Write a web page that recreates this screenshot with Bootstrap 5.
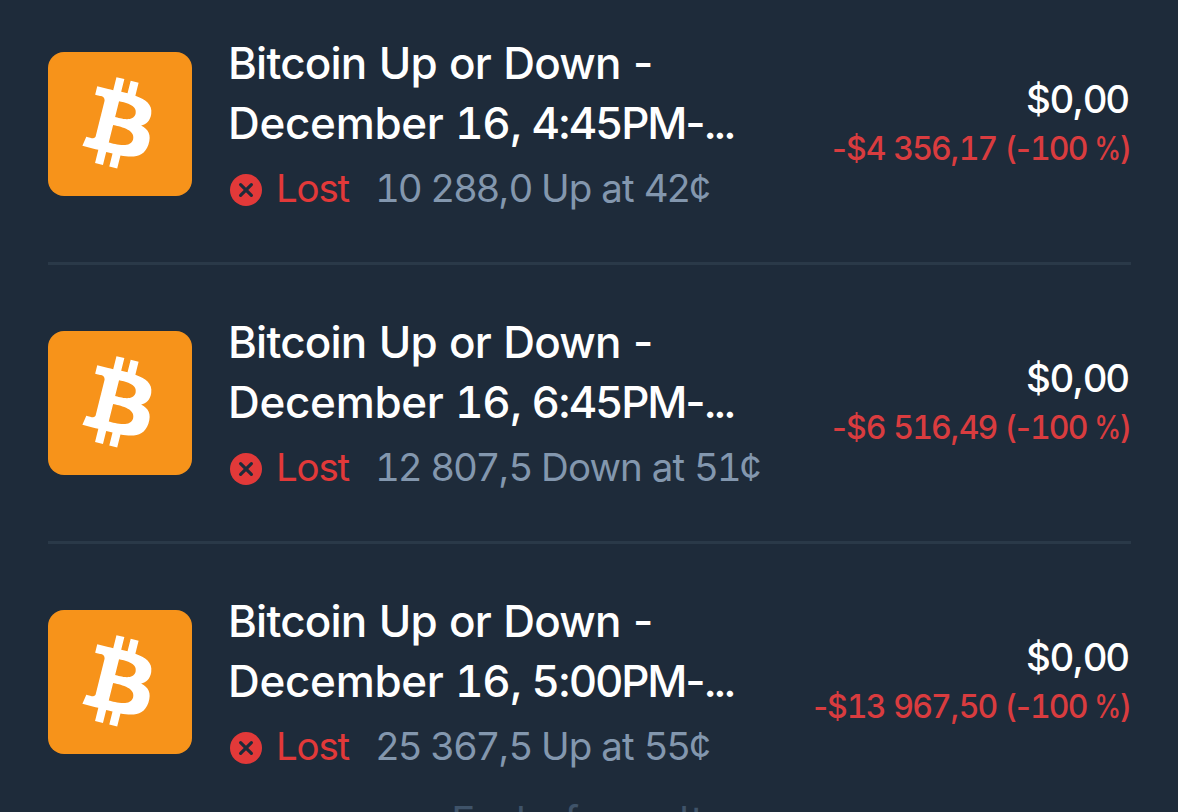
<!DOCTYPE html>
<html lang="en">
<head>
  <meta charset="UTF-8">
  <meta name="viewport" content="width=device-width, initial-scale=1">
  <title>Closed Positions</title>
  <link href="https://cdn.jsdelivr.net/npm/bootstrap@5.3.3/dist/css/bootstrap.min.css" rel="stylesheet">
  <style>
    body {
      background: #1e2b3a;
      color: #fff;
      font-family: Inter, "Liberation Sans", sans-serif;
      font-feature-settings: "calt" 0;
      height: 812px;
      overflow: hidden;
    }
    .positions { padding: 0 47px 0 48px; margin-top: -14px; }
    .position { height: 279px; border-bottom: 3px solid #2a3948; }
    .position:last-child { border-bottom-color: transparent; }
    .coin { width: 144px; height: 144px; border-radius: 16px; background: #f7931a; }
    .info { margin-left: 36px; }
    .title { font-size: 44px; font-weight: 500; line-height: 60px; }
    .line-one { letter-spacing: -0.8px; word-spacing: 1.3px; }
    .line-two { letter-spacing: -0.3px; }
    .time { letter-spacing: -2.2px; margin-left: -2px; }
    .dots { letter-spacing: -3.4px; }
    .meta { font-size: 38.5px; line-height: 54px; margin: 8px 0 0 2px; color: #8397ae; }
    .meta svg { margin-top: 2px; }
    .status { color: #e23939; margin-left: 12px; width: 99px; letter-spacing: -1.2px; }
    .shares { letter-spacing: -0.9px; }
    .num { font-feature-settings: "tnum" 1, "calt" 0; letter-spacing: -0.058em; }
    .line-two .num { letter-spacing: -0.03em; }
    .line-two .time .num { letter-spacing: -0.052em; }
    .shares .num, .amount .num { letter-spacing: -0.06em; }
    .amount { font-size: 38.5px; font-weight: 500; line-height: 48px; letter-spacing: -1.2px; margin-right: -1px; }
    .loss { font-size: 32px; font-weight: 500; line-height: 48px; letter-spacing: -0.9px; word-spacing: 1px; margin-top: 2px; color: #d93c3f; }
    .percent { display: inline-block; transform: scaleX(0.85); margin: 0 -3px; }
    .list-end { font-size: 40px; letter-spacing: 1.1px; line-height: 54px; color: #3f5369; margin-top: -29px; }
  </style>
</head>
<body>

<div class="positions" id="positionList"></div>
<div class="list-end text-center">End of results</div>

<script>
const positions = [
  { time: "4:45PM", shares: "10 288,0 Up at 42¢", loss: "-$4 356,17 (-100 %)" },
  { time: "6:45PM", shares: "12 807,5 Down at 51¢", loss: "-$6 516,49 (-100 %)" },
  { time: "5:00PM", shares: "25 367,5 Up at 55¢", loss: "-$13 967,50 (-100 %)" }
];

const list = document.getElementById("positionList");

// digits get equal widths, punctuation keeps its own
function num(text) {
  return text.replace(/\d+/g, '<span class="num">$&</span>').replace("%", '<span class="percent">%</span>');
}

positions.forEach(p => {
  const row = document.createElement("div");
  row.className = "position d-flex align-items-center";
  row.innerHTML = `
    <svg class="coin flex-shrink-0" viewBox="0.65 0.51 31.44 31.44" fill="#fff">
      <path d="M23.189 14.02c.314-2.096-1.283-3.223-3.465-3.975l.708-2.84-1.728-.43-.69 2.765c-.454-.114-.92-.22-1.385-.326l.695-2.783L15.596 6l-.708 2.839c-.376-.086-.746-.17-1.104-.26l.002-.009-2.384-.595-.46 1.846s1.283.294 1.256.312c.7.175.826.638.805 1.006l-.806 3.235c.048.012.11.03.18.057l-.183-.045-1.13 4.532c-.086.212-.303.531-.793.41.018.025-1.256-.313-1.256-.313l-.858 1.978 2.25.561c.418.105.828.215 1.231.318l-.715 2.872 1.727.43.708-2.84c.472.127.93.245 1.378.357l-.706 2.828 1.728.43.715-2.866c2.948.558 5.164.333 6.097-2.333.752-2.146-.037-3.385-1.588-4.192 1.13-.26 1.98-1.003 2.207-2.538zm-3.95 5.538c-.533 2.147-4.148.986-5.32.695l.95-3.805c1.172.293 4.929.872 4.37 3.11zm.535-5.569c-.487 1.953-3.495.96-4.47.717l.86-3.45c.975.243 4.118.696 3.61 2.733z"/>
    </svg>
    <div class="info text-nowrap">
      <div class="title">
        <div class="line-one">Bitcoin Up or Down -</div>
        <div class="line-two">December ${num("16,")} <span class="time">${num(p.time)}-</span><span class="dots">...</span></div>
      </div>
      <div class="meta d-flex align-items-center">
        <svg class="flex-shrink-0" width="34" height="34" viewBox="0 0 34 34">
          <circle cx="16" cy="18" r="16" fill="#e23939"/>
          <path d="M10.6 12.6l10.8 10.8M21.4 12.6L10.6 23.4" stroke="#1e2b3a" stroke-width="3.2" stroke-linecap="round"/>
        </svg>
        <span class="status">Lost</span>
        <span class="shares">${num(p.shares)}</span>
      </div>
    </div>
    <div class="ms-auto text-end text-nowrap">
      <div class="amount"><span class="me-1">${num("$0,00")}</span></div>
      <div class="loss">${num(p.loss)}</div>
    </div>
  `;
  list.appendChild(row);
});
</script>

<script src="https://cdn.jsdelivr.net/npm/bootstrap@5.3.3/dist/js/bootstrap.bundle.min.js"></script>
</body>
</html>
